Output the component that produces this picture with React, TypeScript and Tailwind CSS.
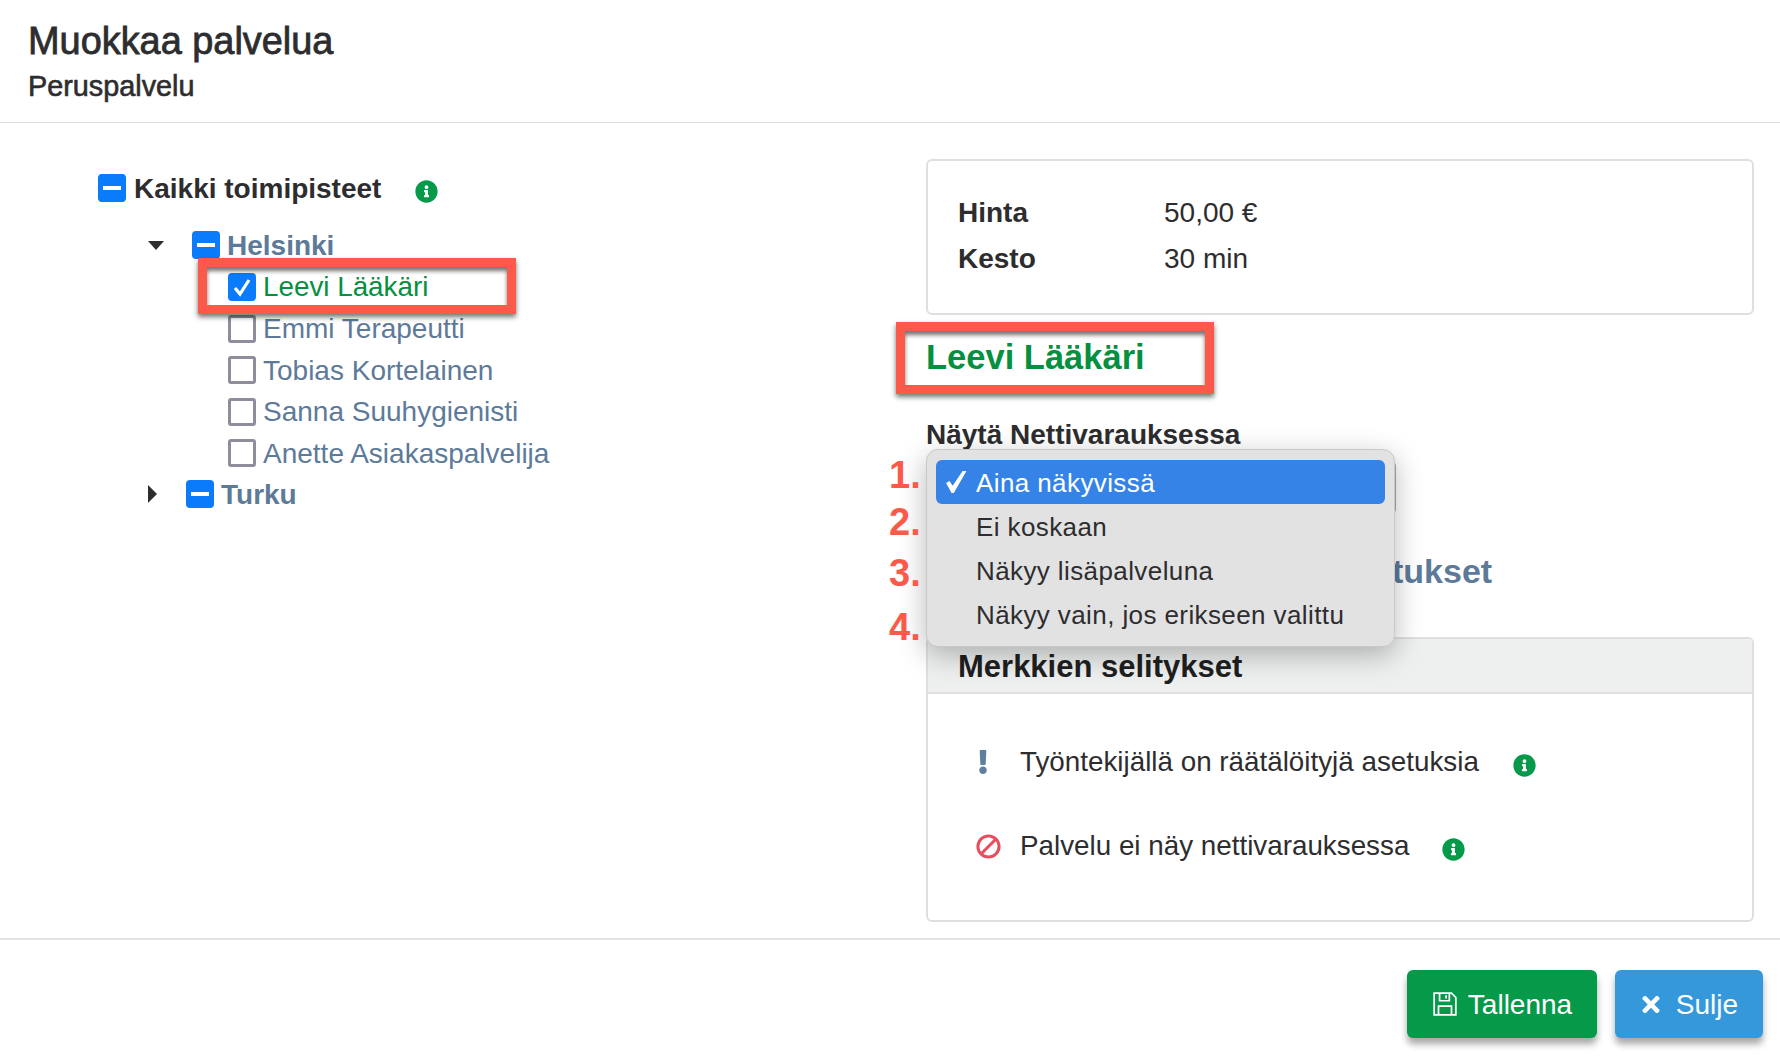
import { FaBan, FaExclamation, FaInfoCircle, FaTimes } from "react-icons/fa";

const MENU_ITEMS = ["Ei koskaan", "Näkyy lisäpalveluna", "Näkyy vain, jos erikseen valittu"];
const STAFF = ["Emmi Terapeutti", "Tobias Kortelainen", "Sanna Suuhygienisti", "Anette Asiakaspalvelija"];
const MARKERS = [
  { label: "1.", className: "top-[3px]" },
  { label: "2.", className: "top-[50px]" },
  { label: "3.", className: "top-[101px]" },
  { label: "4.", className: "top-[155px]" },
];

function MinusBox() {
  return (
    <span className="flex h-[28px] w-[28px] shrink-0 items-center justify-center rounded-[4px] bg-[#0a7bfb]">
      <span className="h-[4px] w-[18px] bg-white" />
    </span>
  );
}

function EmptyBox() {
  return <span className="h-[28px] w-[28px] shrink-0 rounded-[3px] border-[3px] border-[#8d8d9b] bg-white" />;
}

function InfoIcon({ className }: { className: string }) {
  return <FaInfoCircle className={`h-[23px] w-[23px] text-[#059a4a] ${className}`} />;
}

function RedBox({ className }: { className: string }) {
  return (
    <div
      className={`absolute border-[9px] border-[#fb5a4b] shadow-[0_3px_5px_rgba(0,0,0,0.55),inset_0_4px_4px_rgba(0,0,0,0.55)] ${className}`}
    />
  );
}

export default function App() {
  return (
    <div className="flex h-[1060px] w-[1780px] flex-col overflow-hidden bg-white font-['Liberation_Sans',Arial,sans-serif] text-[#2d2d2f]">
      <header className="h-[123px] shrink-0 border-b border-[#dddddd] pl-[28px] pt-[20px]">
        <h1 className="text-[37.9px] leading-[42px] [-webkit-text-stroke:0.8px_#2d2d2f]">Muokkaa palvelua</h1>
        <p className="mt-[7px] text-[28.8px] leading-[34px] [-webkit-text-stroke:0.6px_#2d2d2f]">Peruspalvelu</p>
      </header>

      <main className="flex h-[815px] shrink-0">
        <section className="w-[926px] shrink-0 pl-[98px] pt-[51px]">
          <div className="flex h-[28px] items-center">
            <MinusBox />
            <span className="ml-[8px] mt-[2px] text-[28px] font-bold">Kaikki toimipisteet</span>
            <InfoIcon className="ml-[34px] mt-[6px]" />
          </div>

          <div className="relative ml-[50px] mt-[29px] flex h-[28px] items-center">
            <svg viewBox="0 0 16 9" className="h-[9px] w-[16px]">
              <path d="M0 0h16L8 9z" fill="#2d2d2f" />
            </svg>
            <span className="ml-[28px]">
              <MinusBox />
            </span>
            <span className="ml-[7px] mt-[2px] text-[28px] font-bold text-[#5d7a99]">Helsinki</span>
          </div>

          <div className="ml-[130px] mt-[14px] flex flex-col gap-[13.5px]">
            <div className="relative flex h-[28px] items-center">
              <span className="flex h-[28px] w-[28px] shrink-0 items-center justify-center rounded-[4px] bg-[#0a7bfb]">
                <svg viewBox="0 0 20 20" className="h-[20px] w-[20px]">
                  <path d="M3 11l5 6L17 3" fill="none" stroke="#ffffff" strokeWidth="3.2" />
                </svg>
              </span>
              <span className="ml-[7px] text-[27.8px] text-[#05903f]">Leevi Lääkäri</span>
              <RedBox className="-left-[30px] -top-[15px] h-[56px] w-[318px]" />
            </div>
            {STAFF.map((name) => (
              <div key={name} className="flex h-[28px] items-center">
                <EmptyBox />
                <span className="ml-[7px] mt-[1px] text-[28px] text-[#5d7a99]">{name}</span>
              </div>
            ))}
          </div>

          <div className="ml-[50px] mt-[13px] flex h-[28px] items-center">
            <svg viewBox="0 0 9 18" className="h-[18px] w-[9px]">
              <path d="M0 0l9 9-9 9z" fill="#2d2d2f" />
            </svg>
            <span className="ml-[29px]">
              <MinusBox />
            </span>
            <span className="ml-[7px] mt-[2px] text-[28px] font-bold text-[#5d7a99]">Turku</span>
          </div>
        </section>

        <section className="w-[828px] shrink-0 pt-[36px]">
          <div className="h-[156px] rounded-[6px] border-2 border-[#dfdfdf] px-[30px] pt-[32px] text-[28px]">
            <div className="flex h-[40px] items-center">
              <span className="w-[206px] font-bold">Hinta</span>
              <span>50,00 €</span>
            </div>
            <div className="mt-[6px] flex h-[40px] items-center">
              <span className="w-[206px] font-bold">Kesto</span>
              <span>30 min</span>
            </div>
          </div>

          <div className="relative mt-[20px] flex h-[46px] items-center text-[34.5px] font-bold text-[#05903f]">
            Leevi Lääkäri
            <RedBox className="-left-[30px] -top-[13px] h-[72px] w-[318px]" />
          </div>

          <div className="relative mt-[34px] flex h-[40px] items-center text-[28px] font-bold">
            Näytä Nettivarauksessa
            <div className="absolute left-0 top-[45px] h-[55px] w-[470px] rounded-[6px] border-2 border-[#aaaaaa]" />
            <div className="absolute left-0 top-[34px] z-10 h-[198px] w-[469px] rounded-[12px] border border-[#c9c9c9] bg-[#e2e2e2] px-[9px] pt-[10px] text-[26px] font-normal tracking-[0.4px] shadow-[0_8px_28px_rgba(0,0,0,0.28)]">
              <div className="mb-[1px] flex h-[44px] items-center rounded-[6px] bg-[#3583e6] pl-[9px] text-white">
                <svg viewBox="0 0 20 20" className="h-[22px] w-[22px]">
                  <path d="M1 11l3-2 3 4.5L16 0h3.5L8 20H6z" fill="#ffffff" />
                </svg>
                <span className="ml-[9px] mt-[2px]">Aina näkyvissä</span>
              </div>
              {MENU_ITEMS.map((item) => (
                <div key={item} className="flex h-[44px] items-center pl-[40px] text-[#2d2d2f]">
                  {item}
                </div>
              ))}
              {MARKERS.map((marker) => (
                <span
                  key={marker.label}
                  className={`absolute -left-[38px] text-[38px] font-bold leading-[44px] tracking-normal text-[#fb5a4b] ${marker.className}`}
                >
                  {marker.label}
                </span>
              ))}
            </div>
          </div>

          <div className="mt-[94px] flex h-[44px] items-center pl-[466px] text-[34px] font-bold text-[#5d7a99]">
            tukset
          </div>

          <div className="mt-[44px] h-[285px] overflow-hidden rounded-[6px] border-2 border-[#dfdfdf]">
            <div className="flex h-[55px] items-center border-b-2 border-[#dfdfdf] bg-[#eef0f0] pl-[30px] pt-[3px] text-[31px] font-bold text-[#1f1f21]">
              Merkkien selitykset
            </div>
            <div className="flex flex-col gap-[14px] pt-[33px] text-[27.8px]">
              <div className="flex h-[70px] items-center pl-[50px]">
                <FaExclamation className="h-[24px] w-[10px] text-[#5f7f9f]" />
                <span className="ml-[32px]">Työntekijällä on räätälöityjä asetuksia</span>
                <InfoIcon className="ml-[34px] mt-[6px]" />
              </div>
              <div className="flex h-[70px] items-center pl-[48px]">
                <FaBan className="h-[25px] w-[25px] -scale-x-100 text-[#e4505f]" />
                <span className="ml-[19px]">Palvelu ei näy nettivarauksessa</span>
                <InfoIcon className="ml-[33px] mt-[6px]" />
              </div>
            </div>
          </div>
        </section>
      </main>

      <footer className="flex flex-1 justify-end gap-[18px] border-t-2 border-[#e3e3e3] pr-[17px] pt-[30px] text-[28px] text-white">
        <button className="flex h-[68px] w-[190px] items-center justify-center rounded-[6px] bg-[#059a4a] shadow-[0_6px_7px_rgba(0,0,0,0.35)]">
          <svg viewBox="0 0 24 24" fill="none" stroke="#ffffff" strokeWidth="1.6" className="h-[26px] w-[26px]">
            <path d="M2 2h16l4 4v16H2z" />
            <path d="M7 2v7h9V2M13 4v3M6 22v-8h12v8" />
          </svg>
          <span className="ml-[10px] mt-[2px]">Tallenna</span>
        </button>
        <button className="flex h-[68px] w-[148px] items-center justify-center rounded-[6px] bg-[#3498db] shadow-[0_6px_7px_rgba(0,0,0,0.35)]">
          <FaTimes className="h-[25px] w-[22px]" />
          <span className="ml-[14px] mt-[2px]">Sulje</span>
        </button>
      </footer>
    </div>
  );
}
